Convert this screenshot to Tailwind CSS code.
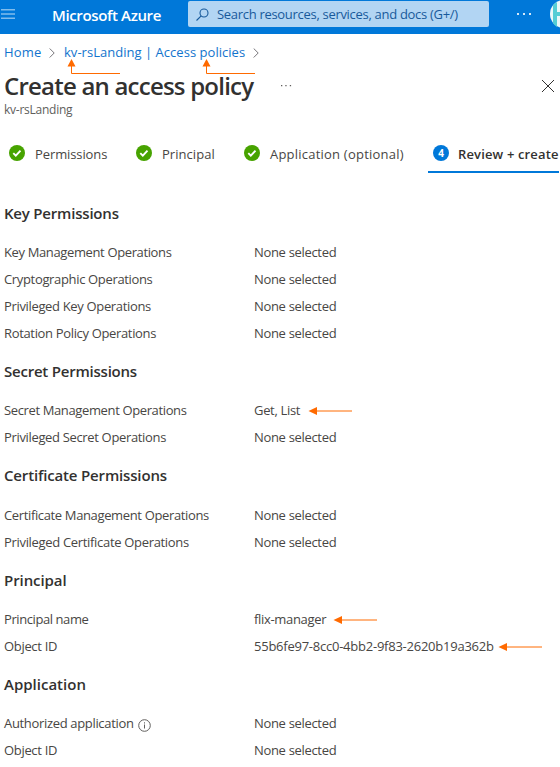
<!DOCTYPE html>
<html lang="en">
<head>
<meta charset="utf-8">
<title>Create an access policy</title>
<script src="https://cdn.jsdelivr.net/npm/@tailwindcss/browser@4"></script>
</head>
<body class="w-[560px] h-[767px] overflow-hidden bg-white font-['Open_Sans','Noto_Sans',sans-serif] text-[13px] text-[#484644] whitespace-nowrap">
<header class="h-[34px] bg-[#0078d9] flex items-start overflow-hidden">
  <svg class="w-[14px] h-[10px] ml-[1px] mt-[9px] shrink-0" viewBox="0 0 14 10"><path d="M0 .8h14M0 5h14M0 9.200h14" stroke="#80bcec" stroke-width="1.500"/></svg>
  <div class="w-[135px] shrink-0 ml-[37px] mt-[5px] leading-5 text-[15px] font-semibold text-white"><span class="tracking-[-0.37px]">Microsoft Azure</span></div>
  <div class="w-[301px] shrink-0 h-[26px] mt-[1px] ml-[1px] rounded-[2px] bg-[#b2d5f3] flex items-center text-[#185a9b]">
    <svg class="w-[13px] h-[13px] ml-[8px] mr-[8px]" viewBox="0 0 13 13" fill="none" stroke="#185a9b" stroke-width="1.100"><circle cx="8" cy="5" r="4"/><path d="M5.200 7.800L.5 12.500"/></svg>
    <span class="tracking-[-0.3px] pt-[1px]">Search resources, services, and docs (G+/)</span>
  </div>
  <svg class="w-[14px] h-[3px] ml-[28px] mt-[12px] shrink-0" viewBox="0 0 14 3" fill="#d5e9f9"><path d="M0 1h2v2H0zM6 1h2v2H6zM12 1h2v2h-2z"/></svg>
  <svg class="w-[28px] h-[28px] ml-[19px] shrink-0" viewBox="0 0 28 28"><circle cx="14" cy="14" r="14" fill="#e9f7f8"/><path d="M3 5.500A14 14 0 0 1 7 2v10h3v4H7v11A14 14 0 0 1 3 23z" fill="#54cdd5"/></svg>
</header>
<div class="relative">
  <nav class="h-[37px] pl-[4px] flex items-center text-[#1274cd]">
    <span class="w-[45px] tracking-[0.2px]">Home</span>
    <svg class="w-[6px] h-[10px]" viewBox="0 0 6 10" fill="none" stroke="#77757a"><path d="M.7.5L5.200 5 .7 9.500"/></svg>
    <span class="ml-[9px] w-[189px] tracking-[0.03px]">kv-rsLanding | Access policies</span>
    <svg class="w-[6px] h-[10px]" viewBox="0 0 6 10" fill="none" stroke="#77757a"><path d="M.7.5L5.200 5 .7 9.500"/></svg>
  </nav>
  <svg class="absolute left-0 top-[24px] w-[260px] h-[17px]" viewBox="0 0 260 17" fill="none" stroke="#ff6a00"><path d="M71.500 7v8.500H120M206.500 7v8.500H255"/><path d="M71.500 1l4 7.500h-8zM206.500 1l4 7.500h-8z" fill="#ff6a00" stroke="none"/></svg>
</div>
<div class="h-[30px] pl-[4px] flex items-center">
  <h1 class="w-[276px] text-[24px] leading-[30px] font-semibold text-[#323130]"><span class="tracking-[-0.78px]">Create an access policy</span></h1>
  <svg class="w-[12px] h-[2px]" viewBox="0 0 12 2" fill="#605e5c"><path d="M1 0h1.300v1.300H1zM5.300 0h1.300v1.300H5.300zM9.800 0h1.300v1.300H9.800z"/></svg>
  <svg class="w-[12px] h-[12px] ml-[250px]" viewBox="0 0 12 12" stroke="#323130"><path d="M0 0l12 12M12 0L0 12"/></svg>
</div>
<p class="pl-[4px] h-[18px] leading-[18px] text-[12px] text-[#605e5c]"><span class="tracking-[-0.25px]">kv-rsLanding</span></p>
<div class="h-[54px] pt-[17px] flex items-start overflow-hidden">
  <div class="ml-[9px] w-[127px] shrink-0 h-[34px] flex items-center gap-[10px]">
    <svg class="w-[16px] h-[16px]" viewBox="0 0 16 16" fill="none"><circle cx="8" cy="8" r="8" fill="#47a300"/><path d="M4.300 8.200l2.500 2.500 4.700-5" stroke="#fff" stroke-width="1.900"/></svg>
    <span class="pt-[3px] tracking-[-0.1px]">Permissions</span>
  </div>
  <div class="w-[108px] shrink-0 h-[34px] flex items-center gap-[10px]">
    <svg class="w-[16px] h-[16px]" viewBox="0 0 16 16" fill="none"><circle cx="8" cy="8" r="8" fill="#47a300"/><path d="M4.300 8.200l2.500 2.500 4.700-5" stroke="#fff" stroke-width="1.900"/></svg>
    <span class="pt-[3px] tracking-[0.05px]">Principal</span>
  </div>
  <div class="w-[184px] shrink-0 h-[34px] flex items-center gap-[10px]">
    <svg class="w-[16px] h-[16px]" viewBox="0 0 16 16" fill="none"><circle cx="8" cy="8" r="8" fill="#47a300"/><path d="M4.300 8.200l2.500 2.500 4.700-5" stroke="#fff" stroke-width="1.900"/></svg>
    <span class="pt-[3px] tracking-[0.22px]">Application (optional)</span>
  </div>
  <div class="w-[131px] shrink-0 h-[37px] pb-[1px] pl-[5px] flex items-center gap-[9px] border-b-2 border-[#0078d9] text-[#323130] font-semibold">
    <span class="w-[16px] h-[16px] rounded-full bg-[#0078d9] text-white text-[10px] leading-[16px] text-center font-bold">4</span>
    <span class="pt-[3px] tracking-[0.15px]">Review + create</span>
  </div>
</div>
<main class="pl-[4px] pt-[16.5px]">
  <section class="pt-[11.5px]">
    <h2 class="h-[24px] mb-[14.5px] leading-[24px] text-[15px] font-semibold text-[#323130] tracking-[-0.2px]">Key Permissions</h2>
    <dl class="grid grid-cols-[250px_1fr] auto-rows-[27px] items-center tracking-[-0.32px]">
      <dt class="tracking-[-0.37px]">Key Management Operations</dt><dd>None selected</dd>
      <dt class="tracking-[-0.34px]">Cryptographic Operations</dt><dd>None selected</dd>
      <dt class="tracking-[-0.34px]">Privileged Key Operations</dt><dd>None selected</dd>
      <dt class="tracking-[-0.34px]">Rotation Policy Operations</dt><dd>None selected</dd>
    </dl>
  </section>
  <section class="pt-[11.5px]">
    <h2 class="h-[24px] mb-[14.5px] leading-[24px] text-[15px] font-semibold text-[#323130] tracking-[-0.22px]">Secret Permissions</h2>
    <dl class="grid grid-cols-[250px_1fr] auto-rows-[27px] items-center tracking-[-0.32px]">
      <dt class="tracking-[-0.37px]">Secret Management Operations</dt>
      <dd class="flex items-center"><span class="w-[54px]">Get, List</span><svg class="w-[44px] h-[8px]" viewBox="0 0 44 8"><path d="M7 4h37" stroke="#ff6a00"/><path d="M.5 4L9 0v8z" fill="#ff6a00"/></svg></dd>
      <dt class="tracking-[-0.34px]">Privileged Secret Operations</dt><dd>None selected</dd>
    </dl>
  </section>
  <section class="pt-[11.5px]">
    <h2 class="h-[24px] mb-[15.5px] leading-[24px] text-[15px] font-semibold text-[#323130] tracking-[-0.16px]">Certificate Permissions</h2>
    <dl class="grid grid-cols-[250px_1fr] auto-rows-[27px] items-center tracking-[-0.32px]">
      <dt class="tracking-[-0.36px]">Certificate Management Operations</dt><dd>None selected</dd>
      <dt class="tracking-[-0.32px]">Privileged Certificate Operations</dt><dd>None selected</dd>
    </dl>
  </section>
  <section class="pt-[11.5px]">
    <h2 class="h-[24px] mb-[14.5px] leading-[24px] text-[15px] font-semibold text-[#323130] tracking-[-0.08px]">Principal</h2>
    <dl class="grid grid-cols-[250px_1fr] auto-rows-[27px] items-center tracking-[-0.32px]">
      <dt class="tracking-[-0.42px]">Principal name</dt>
      <dd class="flex items-center"><span class="w-[79px]">flix-manager</span><svg class="w-[44px] h-[8px]" viewBox="0 0 44 8"><path d="M7 4h37" stroke="#ff6a00"/><path d="M.5 4L9 0v8z" fill="#ff6a00"/></svg></dd>
      <dt>Object ID</dt>
      <dd class="flex items-center"><span class="w-[244px] tracking-[-0.24px]">55b6fe97-8cc0-4bb2-9f83-2620b19a362b</span><svg class="w-[44px] h-[8px]" viewBox="0 0 44 8"><path d="M7 4h37" stroke="#ff6a00"/><path d="M.5 4L9 0v8z" fill="#ff6a00"/></svg></dd>
    </dl>
  </section>
  <section class="pt-[11.5px]">
    <h2 class="h-[24px] mb-[14.5px] leading-[24px] text-[15px] font-semibold text-[#323130]">Application</h2>
    <dl class="grid grid-cols-[250px_1fr] auto-rows-[27px] items-center tracking-[-0.32px]">
      <dt class="flex items-center"><span class="w-[134px] tracking-[-0.33px]">Authorized application</span><svg class="w-[13px] h-[13px] mt-[2px]" viewBox="0 0 13 13" fill="none" stroke="#605e5c"><circle cx="6.500" cy="6.500" r="5.800"/><path d="M6.500 5.500v4M6.500 3.300v1.200"/></svg></dt><dd>None selected</dd>
      <dt>Object ID</dt><dd>None selected</dd>
    </dl>
  </section>
</main>
</body>
</html>
